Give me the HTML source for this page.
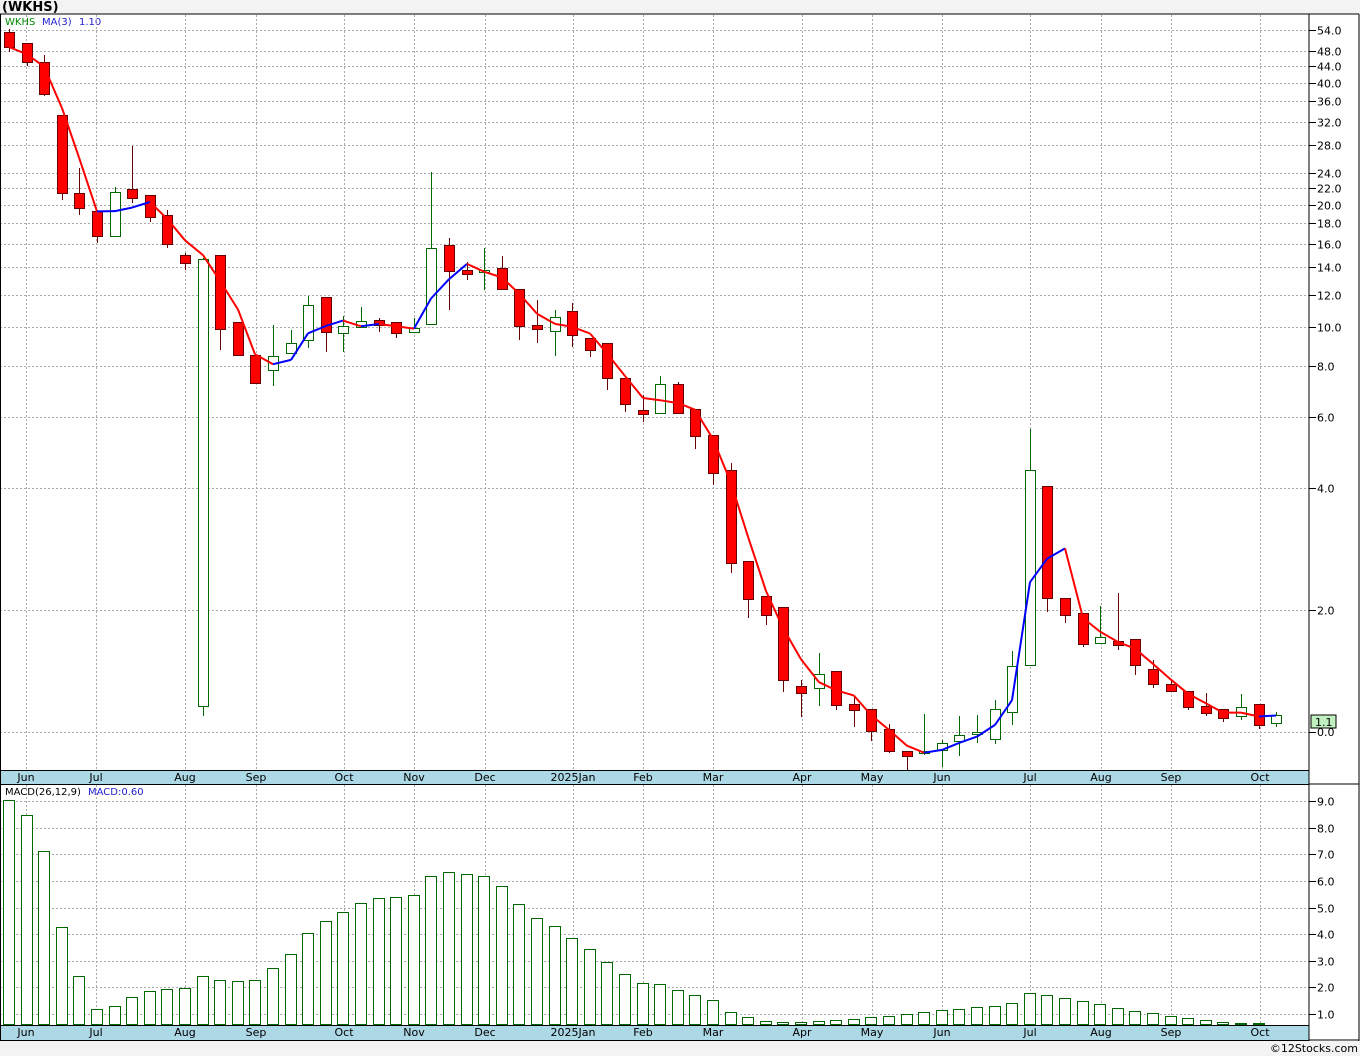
<!DOCTYPE html>
<html><head><meta charset="utf-8"><style>
body{margin:0;background:#f3f3f3;width:1360px;height:1056px;overflow:hidden;font-family:"DejaVu Sans","Liberation Sans",sans-serif}
svg{position:absolute;left:0;top:0}
</style></head><body>
<svg id="s" width="1360" height="1056" xmlns="http://www.w3.org/2000/svg" font-family="DejaVu Sans, Liberation Sans, sans-serif">
<rect x="0" y="14" width="1359" height="1027" fill="#fff"/>
<text x="2" y="11" font-size="13" font-weight="bold" fill="#000">(WKHS)</text>
<text x="5" y="25" font-size="10" fill="#080">WKHS</text>
<text x="42" y="25" font-size="10" fill="#22c">MA(3)</text>
<text x="79" y="25" font-size="10" fill="#22c">1.10</text>
<g id="g"></g>
<text x="5" y="795" font-size="10" fill="#000">MACD(26,12,9)</text>
<text x="88" y="795" font-size="10" fill="#22c">MACD:0.60</text>
<line x1="1309" y1="14" x2="1309" y2="1041" stroke="#000"/>
<line x1="0" y1="14" x2="1359" y2="14" stroke="#000"/>
<line x1="1359" y1="14" x2="1359" y2="1041" stroke="#000"/>
<line x1="0.5" y1="14" x2="0.5" y2="1041" stroke="#000"/>
<line x1="1309" y1="784" x2="1359" y2="784" stroke="#000"/>
<line x1="1309" y1="1040" x2="1359" y2="1040" stroke="#000"/>
<rect x="1311" y="715" width="25" height="13" fill="#c0f0c0" stroke="#000"/>
<text x="1315" y="726" font-size="11" fill="#000">1.1</text>
<text x="1358" y="1052" font-size="11" fill="#000" text-anchor="end">©12Stocks.com</text>
</svg>
<script>
var g=document.getElementById('g'),h='';
function L(x1,y1,x2,y2,c,w,d){h+='<line x1="'+x1+'" y1="'+y1+'" x2="'+x2+'" y2="'+y2+'" stroke="'+c+'" stroke-width="'+(w||1)+'"'+(d?' stroke-dasharray="'+d+'"':'')+'/>';}
function T(x,y,t,a,c){h+='<text x="'+x+'" y="'+y+'" font-size="11" fill="'+(c||'#000')+'" text-anchor="'+(a||'start')+'">'+t+'</text>';}
var months=[[26,'Jun'],[96,'Jul'],[185,'Aug'],[256,'Sep'],[344,'Oct'],[414,'Nov'],[485,'Dec'],[573,'2025Jan'],[643,'Feb'],[713,'Mar'],[802,'Apr'],[872,'May'],[942,'Jun'],[1030,'Jul'],[1101,'Aug'],[1171,'Sep'],[1260,'Oct']];
months.forEach(function(m){L(m[0]+.5,15,m[0]+.5,770,'#aaa',1,'2,2');L(m[0]+.5,785,m[0]+.5,1025,'#aaa',1,'2,2');});
var labs=[54,48,44,40,36,32,28,24,22,20,18,16,14,12,10,8,6,4,2];
function py(p){return 732-405.3*Math.log10(p);}
labs.forEach(function(p){var y=Math.round(py(p))+.5;L(0,y,1309,y,'#aaa',1,'2,2');L(1309,y,1316,y,'#000');T(1317,y+4,p.toFixed(1),'start','#000');});
L(0,732.5,1309,732.5,'#aaa',1,'2,2');L(1309,732.5,1316,732.5,'#000');T(1317,736,'0.0');
for(var v=1;v<=9;v++){var y=Math.round(1040.6-26.6*v)+.5;L(0,y,1309,y,'#aaa',1,'2,2');L(1309,y,1316,y,'#000');T(1317,y+4,v.toFixed(1));}
var C=[[32,47,29,52,0],[43,62,43,66,0],[62,94,55,96,0],[115,193,115,200,0],[193,208,168,215,0],[211,236,211,243,0],[192,236,187,236,1],[189,198,146,203,0],[195,217,195,222,0],[215,244,210,248,0],[255,263,253,270,0],[259,706,258,716,1],[255,329,255,350,0],[322,355,322,355,0],[355,383,355,383,0],[356,370,325,386,1],[343,353,330,353,1],[305,340,296,348,1],[297,332,297,352,0],[326,333,316,352,1],[321,327,307,327,1],[320,325,318,332,0],[322,333,322,338,0],[328,332,318,332,1],[248,324,172,324,1],[245,271,238,310,0],[270,274,262,280,0],[270,272,248,290,1],[268,289,256,289,0],[289,326,289,340,0],[325,329,300,343,0],[317,331,310,356,1],[311,335,303,347,0],[338,350,338,357,0],[343,378,343,390,0],[378,404,378,412,0],[410,414,395,422,0],[384,413,376,413,1],[384,413,382,413,0],[409,436,409,449,0],[435,473,435,485,0],[470,563,463,573,0],[561,599,561,618,0],[596,615,596,625,0],[607,680,607,692,0],[686,693,680,717,0],[674,688,653,706,1],[671,705,671,710,0],[704,710,697,727,0],[709,731,709,741,0],[729,751,724,753,0],[751,756,751,770,0],[751,753,714,755,1],[743,750,740,767,1],[735,741,716,756,1],[732,734,715,743,1],[709,739,700,744,1],[666,712,651,725,1],[470,665,429,665,1],[486,598,486,612,0],[598,615,598,623,0],[613,644,613,647,0],[637,643,606,643,1],[641,645,593,650,0],[639,665,639,675,0],[669,684,660,688,0],[684,691,680,691,0],[691,707,691,710,0],[706,713,693,716,0],[709,718,709,722,0],[707,716,694,720,1],[704,725,704,729,0],[715,723,712,727,1]];
var M=[800,815,851,927,976,1009,1006,997,991,989,988,976,980,981,980,968,954,933,921,912,903,898,897,895,876,872,874,876,886,904,918,926,938,949,962,974,983,984,990,995,1000,1012,1017,1021,1022,1022,1021,1020,1019,1017,1016,1014,1012,1010,1009,1007,1006,1003,993,995,998,1001,1004,1008,1011,1013,1016,1018,1020,1022,1023,1023,1024];
function X(i){return Math.round(9+17.6*i);}
M.forEach(function(t,i){var x=X(i);h+='<rect x="'+(x-5.5)+'" y="'+(t+.5)+'" width="11" height="'+(1024-t)+'" fill="#fff" stroke="#060"/>';});
var cl=[];
C.forEach(function(c,i){var x=X(i)+.5,col=c[4]?'#060':'#600';L(x,c[2],x,c[3],col);var hh=Math.max(c[1]-c[0],2);h+='<rect x="'+(x-5)+'" y="'+(c[0]+.5)+'" width="10" height="'+hh+'" fill="'+(c[4]?'#fff':'#f00')+'" stroke="'+col+'"/>';cl.push(c[4]?c[0]:c[1]);});
function pr(y){return Math.pow(10,(732-y)/405.3);}
var ma=[];for(var i=0;i<cl.length;i++){var a=i<2?cl.slice(0,i+1):cl.slice(i-2,i+1);var s=0;a.forEach(function(y){s+=pr(y)});ma.push(py(s/a.length));}
for(var i=1;i<ma.length;i++){L(X(i-1),ma[i-1].toFixed(1),X(i),ma[i].toFixed(1),ma[i]<ma[i-1]?'#00f':'#f00',2);}
h+='<rect x="0" y="770.5" width="1309" height="14" fill="#add8e6" stroke="#000"/>';
h+='<rect x="0" y="1025.5" width="1309" height="15" fill="#add8e6" stroke="#000"/>';
months.forEach(function(m){T(m[0],781,m[1],'middle');T(m[0],1036,m[1],'middle');});
g.innerHTML=h;
</script>
</body></html>
